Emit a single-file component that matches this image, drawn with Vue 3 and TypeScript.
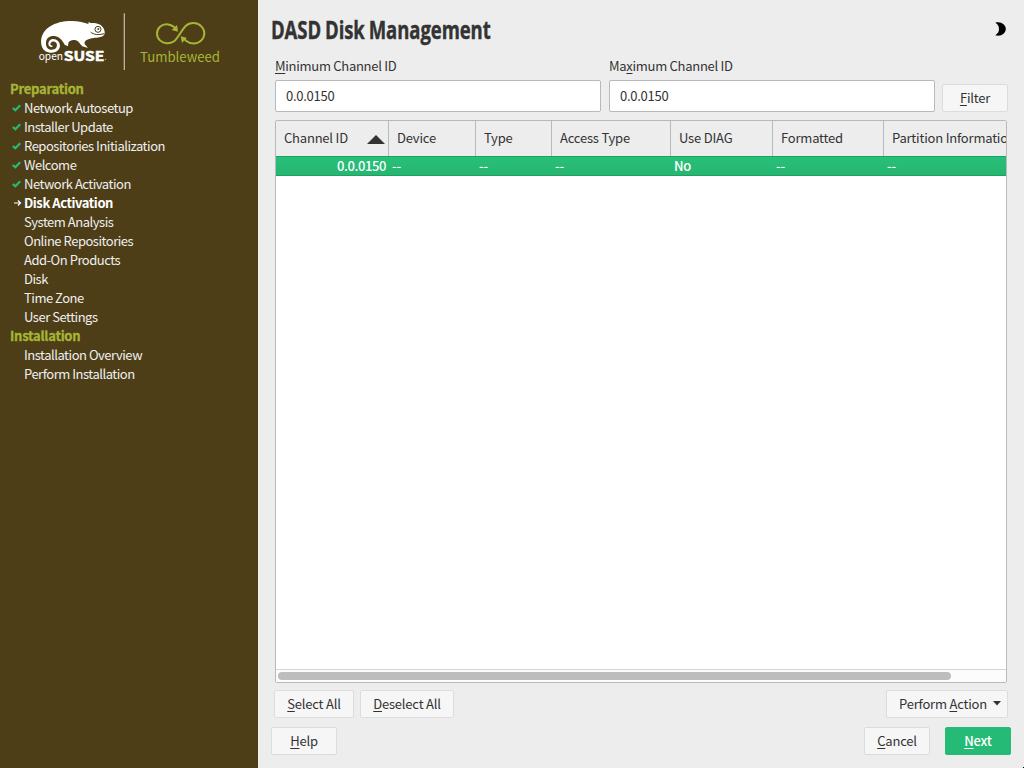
<script setup lang="ts">
interface Step { name: string; state?: 'done' | 'current' }
interface Section { title: string; steps: Step[] }
interface Column { label: string; value: string; width: number; sorted?: boolean }

const sections: Section[] = [
  {
    title: 'Preparation',
    steps: [
      { name: 'Network Autosetup', state: 'done' },
      { name: 'Installer Update', state: 'done' },
      { name: 'Repositories Initialization', state: 'done' },
      { name: 'Welcome', state: 'done' },
      { name: 'Network Activation', state: 'done' },
      { name: 'Disk Activation', state: 'current' },
      { name: 'System Analysis' },
      { name: 'Online Repositories' },
      { name: 'Add-On Products' },
      { name: 'Disk' },
      { name: 'Time Zone' },
      { name: 'User Settings' },
    ],
  },
  {
    title: 'Installation',
    steps: [{ name: 'Installation Overview' }, { name: 'Perform Installation' }],
  },
]

const columns: Column[] = [
  { label: 'Channel ID', value: '0.0.0150', width: 113, sorted: true },
  { label: 'Device', value: '--', width: 87 },
  { label: 'Type', value: '--', width: 76 },
  { label: 'Access Type', value: '--', width: 119 },
  { label: 'Use DIAG', value: 'No', width: 102 },
  { label: 'Formatted', value: '--', width: 111 },
  { label: 'Partition Information', value: '--', width: 160 },
]
</script>

<template>
  <div class="installer">
    <aside class="sidebar">
      <svg class="logo" viewBox="0 0 774 240">
        <path fill="#fff" d="M125 138C116 98 148 70 196 64C226 60 250 66 265 72L266 66L272 69C290 68 306 74 310 84C315 93 316 102 310 107C300 114 284 112 270 116C257 119 252 125 254 132L264 144L247 139C239 132 237 124 228 121C216 118 207 123 205 129L204 139L194 134C188 123 181 113 167 109C151 106 139 113 138 128C137 141 144 149 155 149C167 149 173 140 170 131C167 123 156 122 152 129C149 134 153 138 159 137C157 142 149 142 146 136C143 127 149 118 158 117C170 116 180 126 180 138C178 152 166 159 152 158C137 157 128 149 125 138Z" />
        <circle cx="294" cy="88" r="9" fill="none" stroke="#4d3e18" stroke-width="3" />
        <circle cx="295" cy="87" r="3" fill="#4d3e18" />
        <path d="M272 96C280 104 296 106 312 101" fill="none" stroke="#4d3e18" stroke-width="3" />
        <text class="brand" x="116" y="181" font-size="33" textLength="73" lengthAdjust="spacingAndGlyphs">open</text>
        <text class="brand heavy" x="191" y="182" font-size="39" textLength="122" lengthAdjust="spacingAndGlyphs">SUSE</text>
        <circle cx="317" cy="178" r="1.5" fill="#fff" />
        <path d="M373 40V210" stroke="#b8b1a2" stroke-width="4" />
        <g fill="none" stroke="#a6b535" stroke-width="6">
          <path d="M522 124C507 133 490 131 480 121C468 109 468 91 480 80C492 69 509 71 521 80L528 88" />
          <path d="M522 124C534 115 544 91 557 78C571 65 592 67 604 79C616 91 616 109 604 121C591 134 572 133 558 122L550 114" />
        </g>
        <path fill="#a6b535" d="M534 95L515 90L531 75ZM542 109L560 113L546 129Z" />
        <text class="product" x="420" y="185" font-size="41" textLength="240" lengthAdjust="spacingAndGlyphs">Tumbleweed</text>
      </svg>

      <nav class="steps">
        <section v-for="section in sections" :key="section.title">
          <h2>{{ section.title }}</h2>
          <ul>
            <li v-for="step in section.steps" :key="step.name" :class="step.state">
              <span class="mark">
                <svg v-if="step.state === 'done'" width="9" height="8" viewBox="0 0 9 8">
                  <path d="M.8 4L3.3 6.3L8.2 1.3" fill="none" stroke="#25ba75" stroke-width="2.2" />
                </svg>
                <svg v-if="step.state === 'current'" class="arrow" width="8" height="8" viewBox="0 0 8 8">
                  <path d="M0 4H6M4 1.5L6.5 4L4 6.5" fill="none" stroke="#fff" stroke-width="1.2" />
                </svg>
              </span>
              <span>{{ step.name }}</span>
            </li>
          </ul>
        </section>
      </nav>
    </aside>

    <main class="content">
      <header class="heading">
        <h1>DASD Disk Management</h1>
        <svg class="moon" width="12" height="14" viewBox="0 0 12 14">
          <path d="M.3 .8C5.500-1 10.800 2.500 10.800 7S5.500 15 .3 13.200C3 11.500 4 9.500 4 7S3 2.500 .3 .8Z" />
        </svg>
      </header>

      <div class="filters">
        <label class="field"><span><u>M</u>inimum Channel ID</span><input type="text" value="0.0.0150" /></label>
        <label class="field"><span>Ma<u>x</u>imum Channel ID</span><input type="text" value="0.0.0150" /></label>
        <button class="small"><u>F</u>ilter</button>
      </div>

      <div class="table">
        <div class="row head">
          <div v-for="column in columns" :key="column.label" class="cell" :style="{ width: column.width + 'px' }">
            <span>{{ column.label }}</span>
            <svg v-if="column.sorted" width="18" height="9" viewBox="0 0 18 9"><path d="M0 9L9 0L18 9Z" fill="#333" /></svg>
          </div>
        </div>
        <div class="row selected">
          <div v-for="column in columns" :key="column.label" class="cell" :class="{ number: column.sorted }" :style="{ width: column.width + 'px' }">{{ column.value }}</div>
        </div>
        <div class="empty"></div>
        <div class="scrollbar"><div class="thumb"></div></div>
      </div>

      <div class="actions">
        <button class="select"><u>S</u>elect All</button>
        <button class="deselect"><u>D</u>eselect All</button>
        <button class="perform">
          <span>Perform <u>A</u>ction</span>
          <svg width="8" height="5" viewBox="0 0 8 5"><path d="M0 0H8L4 4.500Z" fill="#333" /></svg>
        </button>
      </div>

      <footer class="actions bottom">
        <button class="small"><u>H</u>elp</button>
        <button class="small cancel"><u>C</u>ancel</button>
        <button class="small next"><u>N</u>ext</button>
      </footer>
    </main>
    <i class="pointer"></i>
  </div>
</template>

<style>
body { margin: 0; overflow: hidden; }
</style>

<style scoped>
* { box-sizing: border-box; }
.installer { position: relative; display: flex; width: 1024px; height: 768px; overflow: hidden; background: #ededed; color: #333; font: 13px/19px "Noto Sans CJK SC", "Noto Sans", sans-serif; letter-spacing: -.2px; }
.sidebar { width: 258px; flex: none; background: #4d3e18; color: #efefef; }
.logo { display: block; width: 258px; height: 80px; letter-spacing: 0; }
.brand { fill: #fff; font-family: "Noto Sans CJK SC", sans-serif; }
.heavy { font-weight: 700; stroke: #fff; stroke-width: 1.5; }
.product { fill: #a6b535; font-family: "Noto Sans CJK SC", sans-serif; }
.steps { margin-top: -1px; }
h2 { margin: 0; padding-left: 10px; font-size: 13px; line-height: 19px; height: 19px; font-weight: 700; color: #a6b535; -webkit-text-stroke: .3px #a6b535; letter-spacing: -.23px; }
ul { list-style: none; margin: 0; padding: 0; }
li { display: flex; height: 19px; padding-left: 12px; white-space: nowrap; letter-spacing: -.48px; }
li.current { color: #fff; font-weight: 700; letter-spacing: -.43px; }
.mark { display: flex; width: 12px; align-items: center; padding-top: 1px; }
.arrow { margin-left: 2px; }
.content { display: flex; flex-direction: column; width: 766px; }
.heading { display: flex; justify-content: space-between; height: 56px; padding: 9px 17px 0 13px; }
h1 { margin: 0; font: 700 25px/40px "Open Sans", sans-serif; letter-spacing: -.1px; word-spacing: -1px; -webkit-text-stroke: .4px #333; white-space: nowrap; transform: scaleX(.74); transform-origin: left; }
.moon { margin-top: 13px; }
.filters { display: flex; align-items: flex-end; gap: 8px; height: 56px; margin-left: 17px; }
.field { width: 326px; letter-spacing: -.28px; }
.field span { display: block; height: 24px; }
.filters .small { margin-left: -1px; }
input { display: block; width: 326px; height: 32px; border: 1px solid #b9b9b9; border-radius: 2px; padding: 0 10px 2px; background: #fff; color: #333; font: inherit; letter-spacing: -.27px; }
u { text-decoration: underline; text-decoration-thickness: 1px; text-underline-offset: 2px; text-decoration-skip-ink: none; }
button { display: flex; align-items: center; justify-content: center; height: 28px; padding: 0 0 2px; border: 1px solid #dcdcdc; border-radius: 2px; background: #f6f6f6; color: #333; font: inherit; letter-spacing: -.2px; white-space: nowrap; }
.small { width: 66px; }
.table { display: flex; flex-direction: column; width: 732px; height: 563px; margin: 8px 0 0 17px; border: 1px solid #b9b9b9; border-radius: 2px; background: #fff; overflow: hidden; }
.row { display: flex; flex: none; }
.cell { flex: none; white-space: nowrap; }
.head { height: 35px; background: #ededed; }
.head .cell { display: flex; align-items: center; justify-content: space-between; padding: 0 3px 2px 8px; border-right: 1px solid #b9b9b9; }
.head svg { margin-top: 4px; }
.selected { height: 20px; width: 768px; background: linear-gradient(#28c078, #26b672); border-top: 1px solid #219f62; border-bottom: 1px solid #219f62; color: #fff; line-height: 18px; font-weight: 500; }
.selected .cell { padding-left: 3px; }
.selected .number { padding: 0 3px 0 0; text-align: right; letter-spacing: -.4px; }
.empty { flex: 1; }
.scrollbar { height: 13px; flex: none; border-top: 1px solid #d5d5d5; background: #fcfcfc; padding: 2px; }
.thumb { width: 673px; height: 8px; border-radius: 4px; background: #bdbdbd; }
.actions { display: flex; height: 28px; margin: 7px 16px 0; }
.select { width: 80px; margin-right: 6px; }
.deselect { width: 94px; }
.perform { width: 122px; margin-left: auto; gap: 6px; padding-left: 6px; }
.bottom { margin: 9px 13px 0; }
.cancel { margin-left: auto; margin-right: 15px; }
.next { border-color: #25ba75; background: #25ba75; color: #fff; font-weight: 500; }
.pointer { position: absolute; right: 0; bottom: 0; width: 1px; height: 1px; background: #000; }
</style>
